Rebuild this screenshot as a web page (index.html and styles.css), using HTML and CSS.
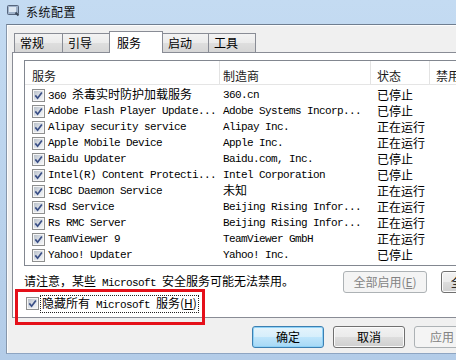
FILE: index.html
```html
<!DOCTYPE html>
<html lang="zh-CN">
<head>
  <meta charset="UTF-8" />
  <title>系统配置</title>
  <link rel="stylesheet" href="styles.css">
</head>
<body>
  <div class="window">
    <div class="titlebar">
      <svg class="app-icon" width="13" height="12" viewBox="0 0 13 12" aria-hidden="true">
        <rect x="0.5" y="0.5" width="11" height="9" rx="1" fill="#9fb2ca" stroke="#56657c" />
        <rect x="2" y="2" width="7" height="5" fill="#dde7f2" />
        <path d="M8.5 7.5 L11.5 10.5" stroke="#3d4a5c" stroke-width="2" />
      </svg>
      <span class="title">系统配置</span>
    </div>

    <div class="client">
      <div class="tabs">
        <div class="tab">常规</div>
        <div class="tab">引导</div>
        <div class="tab active">服务</div>
        <div class="tab">启动</div>
        <div class="tab">工具</div>
      </div>

      <div class="panel">
        <div class="listview">
          <div class="lv-head">
            <div class="cell c1">服务</div>
            <div class="cell c2">制造商</div>
            <div class="cell c3">状态</div>
            <div class="cell c4">禁用</div>
          </div>
          <div class="lv-body" id="rows"></div>
        </div>

        <div class="note-row">
          <p class="note">请注意，某些<span class="mono"> Microsoft </span>安全服务可能无法禁用。</p>
          <button class="btn wide" disabled>全部启用(<u>E</u>)</button>
          <button class="btn wide">全部禁用(<u>D</u>)</button>
        </div>

        <div class="hide-ms">
          <span class="check"><svg viewBox="0 0 9 9"><path d="M1.3 4.4 L3.6 7.2 L7.9 1.4" /></svg></span>
          <span class="focus">隐藏所有<span class="mono"> Microsoft </span>服务(<u>H</u>)</span>
        </div>
      </div>

      <div class="actions">
        <button class="btn default">确定</button>
        <button class="btn">取消</button>
        <button class="btn apply" disabled>应用</button>
      </div>
    </div>

    <div class="callout"></div>
  </div>

  <script>
    const services = [
      ['360 <span class="cn">杀毒实时防护加载服务</span>', '360.cn', '已停止'],
      ['Adobe Flash Player Update...', 'Adobe Systems Incorp...', '已停止'],
      ['Alipay security service', 'Alipay Inc.', '正在运行'],
      ['Apple Mobile Device', 'Apple Inc.', '正在运行'],
      ['Baidu Updater', 'Baidu.com, Inc.', '已停止'],
      ['Intel(R) Content Protecti...', 'Intel Corporation', '已停止'],
      ['ICBC Daemon Service', '<span class="cn">未知</span>', '正在运行'],
      ['Rsd Service', 'Beijing Rising Infor...', '正在运行'],
      ['Rs RMC Server', 'Beijing Rising Infor...', '正在运行'],
      ['TeamViewer 9', 'TeamViewer GmbH', '正在运行'],
      ['Yahoo! Updater', 'Yahoo! Inc.', '已停止'],
      ['Youku Service', 'Youku Inc.', '正在运行']
    ];

    const check = '<span class="check"><svg viewBox="0 0 9 9"><path d="M1.3 4.4 L3.6 7.2 L7.9 1.4" /></svg></span>';

    document.getElementById('rows').innerHTML = services.map(s =>
      '<div class="lv-row">' +
        '<div class="cell c1">' + check + '<span class="name">' + s[0] + '</span></div>' +
        '<div class="cell c2">' + s[1] + '</div>' +
        '<div class="cell c3">' + s[2] + '</div>' +
        '<div class="cell c4"></div>' +
      '</div>'
    ).join('');
  </script>
</body>
</html>
```

FILE: styles.css
```css
body {
  margin: 0;
  overflow: hidden;
  background: #bcd4ed;
  font-family: "Noto Sans CJK SC", sans-serif;
  font-size: 12px;
  color: #000;
}

.window {
  position: relative;
  width: 540px;
  height: 360px;
  background: linear-gradient(180deg, #c4dbf2 0%, #b9d2ec 60%, #b3cce8 100%);
}

.titlebar {
  height: 24px;
  display: flex;
  align-items: center;
  padding-left: 7px;
  box-sizing: border-box;
}

.app-icon {
  margin-top: -3px;
}

.title {
  margin-left: 6px;
  line-height: 16px;
  letter-spacing: 0.5px;
  color: #111;
}

.client {
  margin-left: 6px;
  height: 330px;
  box-sizing: border-box;
  border-top: 1px solid #6f7e90;
  border-left: 1px solid #8797ab;
  border-bottom: 1px solid #8ea5c2;
  background: #f0f0f0;
  box-shadow: inset 1px 1px #fdfdfd;
}

.tabs {
  display: flex;
  align-items: flex-end;
  height: 21px;
  margin: 6px 0 0 7px;
}

.tab {
  height: 19px;
  box-sizing: border-box;
  border: 1px solid #898c95;
  border-bottom: none;
  margin-left: -1px;
  padding-left: 5px;
  line-height: 18px;
  background: linear-gradient(180deg, #f3f3f3 0%, #ebebeb 50%, #dedede 51%, #d6d6d6 100%);
}

.tab:nth-child(1) { width: 49px; margin-left: 0; }
.tab:nth-child(2) { width: 48px; }
.tab:nth-child(4) { width: 47px; }
.tab:nth-child(5) { width: 48px; }

.tab.active {
  position: relative;
  z-index: 1;
  width: 54px;
  height: 22px;
  margin-bottom: -1px;
  padding-left: 7px;
  line-height: 21px;
  background: #fff;
}

.panel {
  height: 266px;
  margin-left: 5px;
  box-sizing: border-box;
  border: 1px solid #898c95;
  background: #fff;
  padding: 7px 0 0 11px;
}

.listview {
  height: 206px;
  box-sizing: border-box;
  border: 1px solid #828790;
  overflow: hidden;
  background: #fff;
}

.lv-head,
.lv-row {
  display: grid;
  grid-template-columns: 195px 151px 59px 1fr;
}

.lv-head {
  height: 24px;
  box-sizing: border-box;
  border-bottom: 1px solid #e5e5e5;
}

.lv-head .cell {
  border-right: 1px solid #e3e3e3;
  padding-top: 7px;
  line-height: 16px;
  color: #1a1a1a;
}

.lv-head .c4 {
  border-right: none;
}

.lv-body {
  padding-top: 2px;
}

.lv-row {
  height: 16px;
  align-items: center;
  font-family: "Liberation Mono", "Noto Sans CJK SC", monospace;
  font-size: 11px;
  letter-spacing: -0.6px;
  line-height: 16px;
  white-space: nowrap;
}

.cell {
  overflow: hidden;
  white-space: nowrap;
}

.c1 { padding-left: 7px; }
.c2 { padding-left: 3px; }
.c3 { padding-left: 6px; }
.c4 { padding-left: 6px; }

.lv-row .c1 {
  display: flex;
  align-items: center;
}

.lv-row .c3 {
  font-family: "Noto Sans CJK SC", sans-serif;
  font-size: 12px;
  letter-spacing: 0;
}

.name {
  margin-left: 3px;
}

.cn {
  font-family: "Noto Sans CJK SC", sans-serif;
  font-size: 12px;
  letter-spacing: 0;
}

.mono {
  font-family: "Liberation Mono", monospace;
  font-size: 11px;
  letter-spacing: -0.6px;
}

.check {
  display: inline-flex;
  flex: none;
  width: 13px;
  height: 13px;
  box-sizing: border-box;
  border: 1px solid #8e8f8f;
  padding: 1px;
  background: #f6f6f6;
}

.check svg {
  width: 9px;
  height: 9px;
  background: linear-gradient(135deg, #b9c0c9 0%, #dde2e8 55%, #f4f5f7 100%);
}

.check path {
  fill: none;
  stroke: #3a4f86;
  stroke-width: 1.7;
}

.note-row {
  display: flex;
  align-items: center;
  height: 22px;
  margin-top: 5px;
}

.note {
  flex: 0 0 319px;
  margin: 0;
  line-height: 22px;
}

.hide-ms {
  display: flex;
  align-items: center;
  height: 15px;
  margin: 3px 0 0 2px;
}

.focus {
  margin-left: 1px;
  padding: 0 1px;
  border: 1px dotted #222;
  line-height: 13px;
}

.btn {
  height: 22px;
  width: 72px;
  padding: 0;
  box-sizing: border-box;
  border: 1px solid #707070;
  border-radius: 3px;
  background: linear-gradient(180deg, #f2f2f2 0%, #ebebeb 50%, #dddddd 51%, #cfcfcf 100%);
  box-shadow: inset 0 0 0 1px #fbfbfb;
  font-family: "Noto Sans CJK SC", sans-serif;
  font-size: 12px;
  color: #000;
  line-height: 20px;
}

.btn.wide {
  width: 86px;
  margin-right: 14px;
}

.btn:disabled {
  border-color: #adb2b5;
  background: #f4f4f4;
  box-shadow: none;
  color: #838383;
}

.btn.default {
  border-color: #3c7fb1;
  background: linear-gradient(180deg, #e5f4fc 0%, #d6eefb 50%, #bfe5fb 51%, #a6d8f5 100%);
  box-shadow: inset 0 0 0 1px #8fd2f7;
}

.btn.apply {
  text-align: left;
  padding-left: 15px;
}

.actions {
  display: flex;
  gap: 9px;
  margin-top: 8px;
  padding-left: 245px;
}

.callout {
  position: absolute;
  left: 15px;
  top: 289px;
  width: 190px;
  height: 36px;
  box-sizing: border-box;
  border: 3px solid #e5101a;
}
```
